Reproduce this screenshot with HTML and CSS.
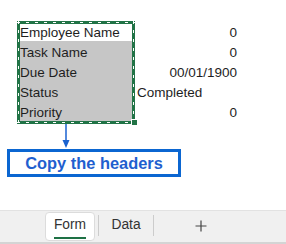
FILE: index.html
```html
<!DOCTYPE html>
<html>
<head>
  <title>Form</title>
  <link rel="stylesheet" href="styles.css">
</head>
<body>
  <div class="sheet">
    <div class="cols">
      <div class="col-a">
        <div class="cell first">Employee Name</div>
        <div class="cell">Task Name</div>
        <div class="cell">Due Date</div>
        <div class="cell">Status</div>
        <div class="cell">Priority</div>
      </div>
      <div class="col-b">
        <div class="cell num">0</div>
        <div class="cell num">0</div>
        <div class="cell num">00/01/1900</div>
        <div class="cell">Completed</div>
        <div class="cell num">0</div>
      </div>
    </div>
    <svg class="arrow" width="10" height="24" viewBox="0 0 10 24">
      <line x1="5" y1="0" x2="5" y2="17" stroke="#1a62d0" stroke-width="1.5"/>
      <polygon points="1.5,16 8.5,16 5,24" fill="#1a62d0"/>
    </svg>
    <div class="note">Copy the headers</div>
  </div>

  <div class="tabs">
    <div class="tab active"><span>Form</span></div>
    <div class="sep"></div>
    <div class="tab"><span>Data</span></div>
    <div class="sep"></div>
    <div class="add">
      <svg width="12" height="12" viewBox="0 0 12 12">
        <path d="M6 0.5V11.5M0.5 6H11.5" stroke="#444" stroke-width="1.2"/>
      </svg>
    </div>
  </div>
</body>
</html>
```

FILE: styles.css
```css
body {
  margin: 0;
  background-color: #ffffff;
  font-family: "Liberation Sans", Arial, sans-serif;
}

.sheet {
  height: 210px;
  padding-top: 21px;
  box-sizing: border-box;
}

.cols {
  display: flex;
  margin-left: 17px;
}

.cell {
  box-sizing: border-box;
  height: 20px;
  padding-top: 4px;
  line-height: 16px;
  font-size: 13.5px;
  color: #1e1e1e;
  white-space: nowrap;
}

.col-a {
  position: relative;
  width: 118px;
}

.col-a .cell {
  padding-left: 3px;
  background-color: #c6c6c6;
}

.col-a .cell.first {
  background-color: #ffffff;
}

/* marching ants selection: dashes drawn on top of the green strips */
.col-a::after {
  content: "";
  position: absolute;
  top: 0;
  left: 0;
  right: 0;
  bottom: -3px;
  background:
    repeating-linear-gradient(90deg, #ffffff 0 3px, transparent 3px 9px) 0 1px / 100% 1px no-repeat,
    repeating-linear-gradient(90deg, #ffffff 0 3px, transparent 3px 9px) 0 calc(100% - 1px) / 100% 1px no-repeat,
    repeating-linear-gradient(180deg, #ffffff 0 3px, transparent 3px 9px) 1px 0 / 1px 100% no-repeat,
    repeating-linear-gradient(180deg, #ffffff 0 3px, transparent 3px 9px) calc(100% - 1px) 0 / 1px 100% no-repeat,
    linear-gradient(#217346, #217346) 0 0 / 100% 3px no-repeat,
    linear-gradient(#217346, #217346) 0 100% / 100% 3px no-repeat,
    linear-gradient(#217346, #217346) 0 0 / 3px 100% no-repeat,
    linear-gradient(#217346, #217346) 100% 0 / 3px 100% no-repeat;
}

.col-a::before {
  content: "";
  position: absolute;
  right: -3px;
  bottom: -5px;
  width: 5px;
  height: 5px;
  background-color: #217346;
  border: 1px solid #ffffff;
  z-index: 2;
}

.col-b {
  width: 105px;
}

.col-b .cell {
  padding-left: 2px;
}

.col-b .cell.num {
  text-align: right;
  padding-right: 3px;
}

.arrow {
  display: block;
  margin: 3px 0 0 61px;
}

.note {
  box-sizing: border-box;
  width: 174px;
  height: 28px;
  margin: 1px 0 0 7px;
  border: 3px solid #0b66d1;
  color: #1f5fcf;
  font-weight: bold;
  font-size: 16.4px;
  line-height: 23px;
  text-align: center;
}

.tabs {
  display: flex;
  align-items: stretch;
  height: 34px;
  box-sizing: border-box;
  padding-left: 45px;
  background-color: #f0f0f0;
  border-top: 1px solid #e2e2e2;
  border-bottom: 2px solid #d4d4d4;
}

.tab {
  display: flex;
  align-items: center;
  justify-content: center;
  width: 48px;
  font-size: 13.8px;
  color: #333333;
}

.tab span {
  padding: 3px 0 5px;
  border-bottom: 2px solid transparent;
}

.tab.active {
  width: 50px;
  margin: 1px 0 1px;
  background-color: #ffffff;
  border: 1px solid #dcdcdc;
  border-radius: 4px;
  box-sizing: border-box;
}

.tab.active span {
  border-bottom-color: #1e7145;
}

.sep {
  width: 1px;
  margin: 4px 3px 6px;
  background-color: #cccccc;
}

.add {
  display: flex;
  align-items: center;
  margin-left: 38px;
  padding-bottom: 2px;
}
```
